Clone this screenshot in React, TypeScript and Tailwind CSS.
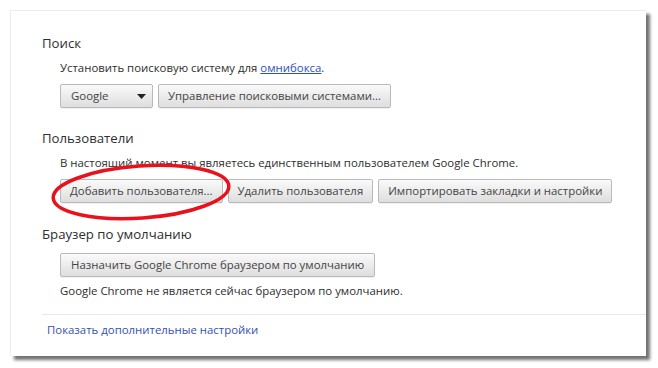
import React from "react";

const font = { fontFamily: '"Open Sans", "Noto Sans", sans-serif' };

function Btn({ children, className = "" }: { children: React.ReactNode; className?: string }) {
  return (
    <button
      className={`h-[24px] px-[9px] border border-[#b9b9b9] rounded-[2px] bg-gradient-to-b from-[#fafafa] to-[#dedede] text-[11.4px] text-[#444] leading-[22px] shadow-[0_1px_0_rgba(0,0,0,0.06)] whitespace-nowrap ${className}`}
    >
      {children}
    </button>
  );
}

export default function App() {
  return (
    <div className="w-[658px] h-[368px] bg-white relative overflow-hidden" style={font}>
      {/* window */}
      <div className="absolute left-[10px] top-[10px] w-[636px] h-[346px] bg-white border-t border-l border-[#ececec] shadow-[4px_4px_3px_rgba(0,0,0,0.55)]">
        <div className="flex flex-col pl-[31px] pt-[22px] text-[#2e2e2e]">
          <h3 className="text-[13.2px] leading-[20px]">Поиск</h3>
          <div className="ml-[18px] mt-[7px] text-[11.4px] leading-[16px]">
            Установить поисковую систему для{" "}
            <span className="text-[#2a4fc0] underline">омнибокса</span>.
          </div>
          <div className="ml-[18px] mt-[8px] flex gap-[5px]">
            <Btn className="w-[93px] flex items-center justify-between pl-[10px] pr-[6px]">
              <span>Google</span>
              <svg width="9" height="5" viewBox="0 0 9 5">
                <path d="M0 0h9L4.5 5z" fill="#222" />
              </svg>
            </Btn>
            <Btn>Управление поисковыми системами...</Btn>
          </div>

          <h3 className="mt-[20px] text-[13.2px] leading-[20px]">Пользователи</h3>
          <div className="ml-[18px] mt-[7px] text-[11.4px] leading-[16px]">
            В настоящий момент вы являетесь единственным пользователем Google Chrome.
          </div>
          <div className="ml-[18px] mt-[8px] flex gap-[5px]">
            <Btn>Добавить пользователя...</Btn>
            <Btn>Удалить пользователя</Btn>
            <Btn>Импортировать закладки и настройки</Btn>
          </div>

          <h3 className="mt-[21px] text-[13.2px] leading-[20px]">Браузер по умолчанию</h3>
          <div className="ml-[18px] mt-[9px] flex">
            <Btn className="px-[10px]">Назначить Google Chrome браузером по умолчанию</Btn>
          </div>
          <div className="ml-[18px] mt-[6px] text-[11.4px] leading-[16px]">
            Google Chrome не является сейчас браузером по умолчанию.
          </div>
        </div>
        <div className="ml-[31px] mt-[15px] border-t border-[#e8e8e8]" />
        <div className="ml-[36px] mt-[7px] text-[11.4px] leading-[16px] text-[#3650b5]">
          Показать дополнительные настройки
        </div>
      </div>

      {/* red annotation ellipse */}
      <svg className="absolute left-0 top-0 pointer-events-none" width="658" height="368">
        <ellipse
          cx="141"
          cy="192"
          rx="88"
          ry="26"
          transform="rotate(-4 141 192)"
          fill="none"
          stroke="#e8121c"
          strokeWidth="3.5"
        />
      </svg>
    </div>
  );
}
